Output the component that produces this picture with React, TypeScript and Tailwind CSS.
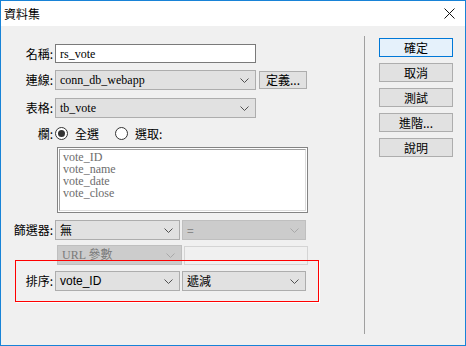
import React from 'react';

const cjk = '"Noto Sans CJK TC", "Noto Sans", sans-serif';
const serif = '"Liberation Serif", "Noto Sans CJK TC", serif';

function Chevron({ color = '#505050' }: { color?: string }) {
    return (
        <svg width="9" height="5" viewBox="0 0 9 5" className="shrink-0">
            <path d="M0.5 0.5 L4.5 4.5 L8.5 0.5" fill="none" stroke={color} strokeWidth="1" />
        </svg>
    );
}

function Label({ text }: { text: string }) {
    return (
        <div className="w-[54px] shrink-0 text-right text-[12px] text-black pr-[2px]" style={{ fontFamily: cjk }}>
            {text}
        </div>
    );
}

function Select({
    value,
    width,
    disabled = false,
    font = serif,
}: {
    value: string;
    width: string;
    disabled?: boolean;
    font?: string;
}) {
    return (
        <div
            className={`${width} h-[20px] flex items-center justify-between pl-[4px] pr-[6px] border text-[12px] ${
                disabled ? 'bg-[#cccccc] border-[#bfbfbf] text-[#7a7a7a]' : 'bg-[#e1e1e1] border-[#adadad] text-black'
            }`}
            style={{ fontFamily: font }}
        >
            <span className="leading-none">{value}</span>
            <Chevron color={disabled ? '#a8a8a8' : '#505050'} />
        </div>
    );
}

function Radio({ checked, label }: { checked: boolean; label: string }) {
    return (
        <div className="flex items-center gap-[7px]">
            <div className="w-[13px] h-[13px] rounded-full border border-[#333333] bg-white flex items-center justify-center">
                {checked && <div className="w-[7px] h-[7px] rounded-full bg-[#333333]" />}
            </div>
            <span className="text-[12px] text-black" style={{ fontFamily: cjk }}>
                {label}
            </span>
        </div>
    );
}

function DlgButton({ text, primary = false }: { text: string; primary?: boolean }) {
    return (
        <div
            className={`w-[74px] h-[19px] flex items-center justify-center border text-[12px] text-black ${
                primary ? 'bg-[#e5f1fb] border-[#0078d7]' : 'bg-[#e1e1e1] border-[#adadad]'
            }`}
            style={{ fontFamily: cjk }}
        >
            {text}
        </div>
    );
}

export default function App() {
    const columns = ['vote_ID', 'vote_name', 'vote_date', 'vote_close'];

    return (
        <div className="w-[466px] h-[346px] border border-[#1883d7] bg-[#f0f0f0] flex flex-col overflow-hidden">
            {/* title bar */}
            <div className="h-[25px] shrink-0 bg-white flex items-center justify-between pl-[3px] pr-[10px]">
                <span className="text-[12px] text-black" style={{ fontFamily: cjk }}>
                    資料集
                </span>
                <svg width="11" height="11" viewBox="0 0 11 11">
                    <path d="M0.5 0.5 L10.5 10.5 M10.5 0.5 L0.5 10.5" stroke="#111" strokeWidth="1" />
                </svg>
            </div>

            <div className="flex flex-1">
                {/* left pane */}
                <div className="relative w-[363px] shrink-0 flex flex-col">
                    <div className="flex items-center mt-[18px]">
                        <Label text="名稱:" />
                        <div
                            className="w-[201px] h-[19px] bg-white border border-[#7a7a7a] flex items-center pl-[4px] text-[12px]"
                            style={{ fontFamily: serif }}
                        >
                            rs_vote
                        </div>
                    </div>

                    <div className="flex items-center mt-[7px]">
                        <Label text="連線:" />
                        <Select value="conn_db_webapp" width="w-[201px]" />
                        <div
                            className="ml-[3px] w-[48px] h-[18px] bg-[#e1e1e1] border border-[#adadad] flex items-center justify-center text-[12px]"
                            style={{ fontFamily: cjk }}
                        >
                            定義...
                        </div>
                    </div>

                    <div className="flex items-center mt-[8px]">
                        <Label text="表格:" />
                        <Select value="tb_vote" width="w-[201px]" />
                    </div>

                    <div className="flex items-center mt-[9px] h-[13px]">
                        <Label text="欄:" />
                        <div className="flex items-center gap-[16px]">
                            <Radio checked label="全選" />
                            <Radio checked={false} label="選取:" />
                        </div>
                    </div>

                    <div className="flex mt-[7px]">
                        <div className="w-[56px] shrink-0" />
                        <div className="w-[251px] h-[66px] border border-[#838383] bg-white p-[1px]">
                            <div
                                className="w-full h-full border-t border-l border-[#a0a0a0] border-b-[#dcdcdc] border-r-[#dcdcdc] border-b border-r pl-[3px] pt-[1px] text-[12px] leading-[12px] text-[#6d6d6d]"
                                style={{ fontFamily: serif }}
                            >
                                {columns.map((c) => (
                                    <div key={c}>{c}</div>
                                ))}
                            </div>
                        </div>
                    </div>

                    <div className="flex items-center mt-[7px]">
                        <Label text="篩選器:" />
                        <Select value="無" width="w-[125px]" font={cjk} />
                        <div className="ml-[2px]">
                            <Select value="=" width="w-[124px]" disabled font={cjk} />
                        </div>
                    </div>

                    <div className="flex items-center mt-[5px]">
                        <div className="w-[56px] shrink-0" />
                        <Select value="URL 參數" width="w-[125px]" disabled />
                        <div className="ml-[2px] w-[124px] h-[19px] bg-[#f0f0f0] border border-[#d4d4d4]" />
                    </div>

                    <div className="flex items-center mt-[6px]">
                        <Label text="排序:" />
                        <Select value="vote_ID" width="w-[125px]" font={'"Liberation Sans", sans-serif'} />
                        <div className="ml-[2px]">
                            <Select value="遞減" width="w-[124px]" font={cjk} />
                        </div>
                    </div>

                    {/* highlight annotation */}
                    <div className="absolute left-[14px] top-[234px] w-[304px] h-[42px] border border-[#ff0000] shadow-[1px_1px_0_#ffffff]" />
                </div>

                {/* separator */}
                <div className="w-px bg-[#a0a0a0] mt-[10px] mb-[11px]" />

                {/* right pane */}
                <div className="flex flex-col gap-[6px] pl-[14px] pt-[12px]">
                    <DlgButton text="確定" primary />
                    <DlgButton text="取消" />
                    <DlgButton text="測試" />
                    <DlgButton text="進階..." />
                    <DlgButton text="說明" />
                </div>
            </div>
        </div>
    );
}
